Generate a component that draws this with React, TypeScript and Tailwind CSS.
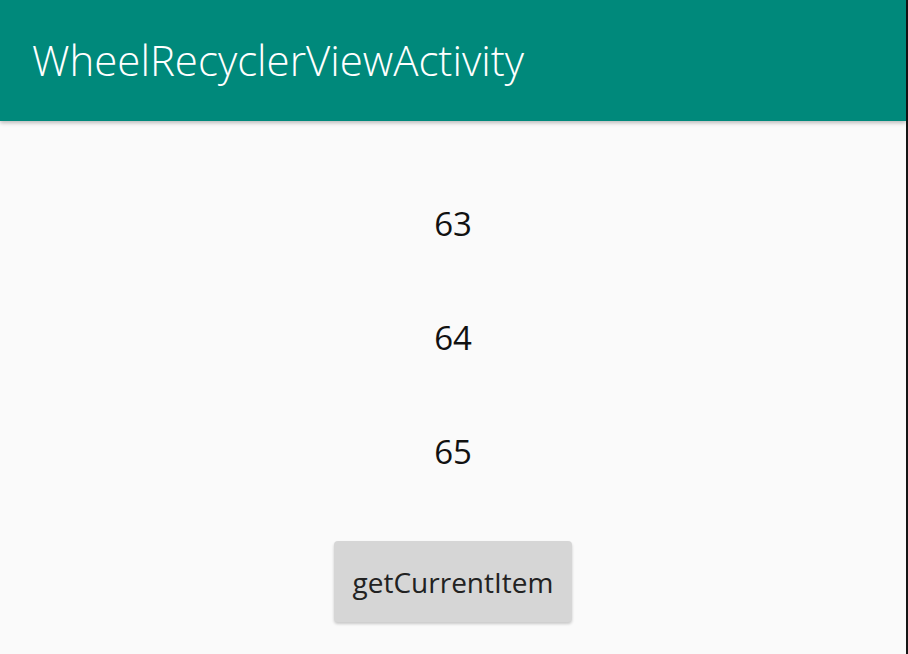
export default function App() {
  return (
    <div className="w-[908px] h-[654px] flex bg-[#151515] overflow-hidden" style={{ fontFamily: '"Open Sans", "Liberation Sans", sans-serif' }}>
      <div className="w-[906px] h-full flex flex-col bg-[#fafafa]">
        <div className="h-[121px] bg-[#00897b] flex items-center pl-[32px] shadow-[0_2px_4px_rgba(0,0,0,0.25)] relative z-10">
          <span className="text-white text-[42px] font-light leading-none pb-[2px]">WheelRecyclerViewActivity</span>
        </div>
        <div className="flex flex-col items-center">
          <div className="h-[114px] mt-[46px] flex items-center text-[33px] text-[#111]">63</div>
          <div className="h-[114px] flex items-center text-[33px] text-[#111]">64</div>
          <div className="h-[114px] flex items-center text-[33px] text-[#111]">65</div>
          <div className="mt-[32px] w-[238px] h-[81px] bg-[#d6d6d6] rounded-[4px] shadow-[0_2px_3px_rgba(0,0,0,0.2)] flex items-center justify-center text-[28px] text-[#222]">getCurrentItem</div>
        </div>
      </div>
    </div>
  );
}
